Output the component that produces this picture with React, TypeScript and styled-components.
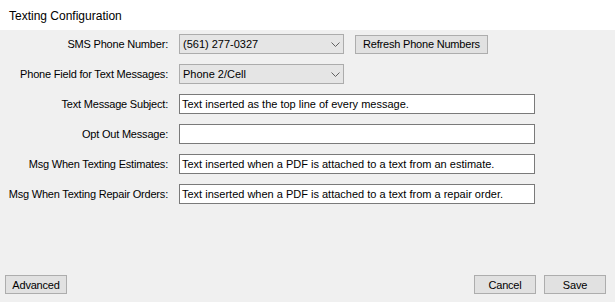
import React from 'react';
import styled, { createGlobalStyle } from 'styled-components';

const GlobalStyle = createGlobalStyle`
  html, body {
    margin: 0;
    padding: 0;
    background: #f0f0f0;
  }
  * {
    box-sizing: border-box;
  }
`;

const Window = styled.div`
  width: 615px;
  height: 302px;
  display: flex;
  flex-direction: column;
  background: #f0f0f0;
  font-family: 'Liberation Sans', Arial, sans-serif;
  color: #000;
`;

const TitleBar = styled.div`
  height: 30px;
  background: #fff;
  display: flex;
  align-items: center;
  padding: 1px 0 0 9px;
  font-size: 12px;
`;

const Form = styled.div`
  flex: 1;
  display: grid;
  grid-template-columns: 168px 1fr;
  grid-auto-rows: 20px;
  column-gap: 11px;
  row-gap: 10px;
  padding-top: 4px;
  align-content: start;
`;

const Label = styled.label`
  display: flex;
  align-items: center;
  justify-content: flex-end;
  font-size: 11px;
  letter-spacing: -0.2px;
  white-space: nowrap;
`;

const FieldRow = styled.div`
  display: flex;
  align-items: center;
  gap: 11px;
`;

const Combo = styled.div`
  width: 165px;
  height: 20px;
  background: #e5e5e5;
  border: 1px solid #acacac;
  display: flex;
  align-items: center;
  justify-content: space-between;
  padding: 0 3px 0 3px;
  font-size: 11px;
`;

const Chevron = styled.svg`
  width: 9px;
  height: 5px;
  flex: none;
`;

const TextBox = styled.div`
  width: 356px;
  height: 20px;
  background: #fff;
  border: 1px solid #7a7a7a;
  display: flex;
  align-items: center;
  padding-left: 2px;
  font-size: 11px;
  white-space: nowrap;
  overflow: hidden;
`;

const Button = styled.button<{ $width?: number }>`
  width: ${({ $width }) => $width ?? 62}px;
  height: 19px;
  padding: 0;
  background: #e1e1e1;
  border: 1px solid #adadad;
  font-family: 'Liberation Sans', Arial, sans-serif;
  font-size: 11px;
  letter-spacing: -0.2px;
  color: #000;
  display: flex;
  align-items: center;
  justify-content: center;
`;

const Footer = styled.div`
  display: flex;
  align-items: center;
  gap: 8px;
  padding: 0 9px 8px 5px;
`;

const Spacer = styled.div`
  flex: 1;
`;

const ComboBox: React.FC<{ value: string }> = ({ value }) => (
  <Combo>
    <span>{value}</span>
    <Chevron viewBox="0 0 9 5">
      <path d="M0.5 0.5 L4.5 4.5 L8.5 0.5" fill="none" stroke="#606060" strokeWidth="1" />
    </Chevron>
  </Combo>
);

const fields = [
  { label: 'Text Message Subject:', value: 'Text inserted as the top line of every message.' },
  { label: 'Opt Out Message:', value: '' },
  { label: 'Msg When Texting Estimates:', value: 'Text inserted when a PDF is attached to a text from an estimate.' },
  { label: 'Msg When Texting Repair Orders:', value: 'Text inserted when a PDF is attached to a text from a repair order.' },
];

const App: React.FC = () => (
  <>
    <GlobalStyle />
    <Window>
      <TitleBar>Texting Configuration</TitleBar>
      <Form>
        <Label>SMS Phone Number:</Label>
        <FieldRow>
          <ComboBox value="(561) 277-0327" />
          <Button $width={133}>Refresh Phone Numbers</Button>
        </FieldRow>
        <Label>Phone Field for Text Messages:</Label>
        <FieldRow>
          <ComboBox value="Phone 2/Cell" />
        </FieldRow>
        {fields.map((f) => (
          <React.Fragment key={f.label}>
            <Label>{f.label}</Label>
            <FieldRow>
              <TextBox>{f.value}</TextBox>
            </FieldRow>
          </React.Fragment>
        ))}
      </Form>
      <Footer>
        <Button>Advanced</Button>
        <Spacer />
        <Button>Cancel</Button>
        <Button>Save</Button>
      </Footer>
    </Window>
  </>
);

export default App;
